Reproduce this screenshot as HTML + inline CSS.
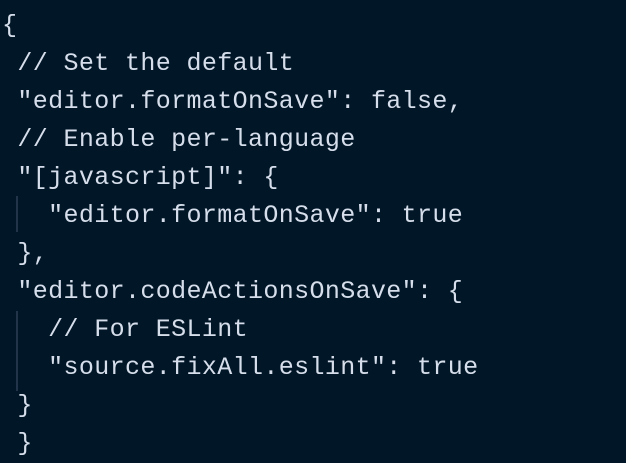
<html><head><style>
body{margin:0;width:626px;height:463px;background:#011627;overflow:hidden;position:relative}
pre{margin:0;position:absolute;left:2px;top:7px;font-family:"Liberation Mono",monospace;font-size:25px;line-height:38px;color:#d6deeb;letter-spacing:0.37px}
.g{position:absolute;left:16px;width:2px;background:#22344a}
</style></head><body>
<div class="g" style="top:196px;height:36px"></div>
<div class="g" style="top:311px;height:80px"></div>
<pre>{
 // Set the default
 "editor.formatOnSave": false,
 // Enable per-language
 "[javascript]": {
   "editor.formatOnSave": true
 },
 "editor.codeActionsOnSave": {
   // For ESLint
   "source.fixAll.eslint": true
 }
 }</pre>
</body></html>
